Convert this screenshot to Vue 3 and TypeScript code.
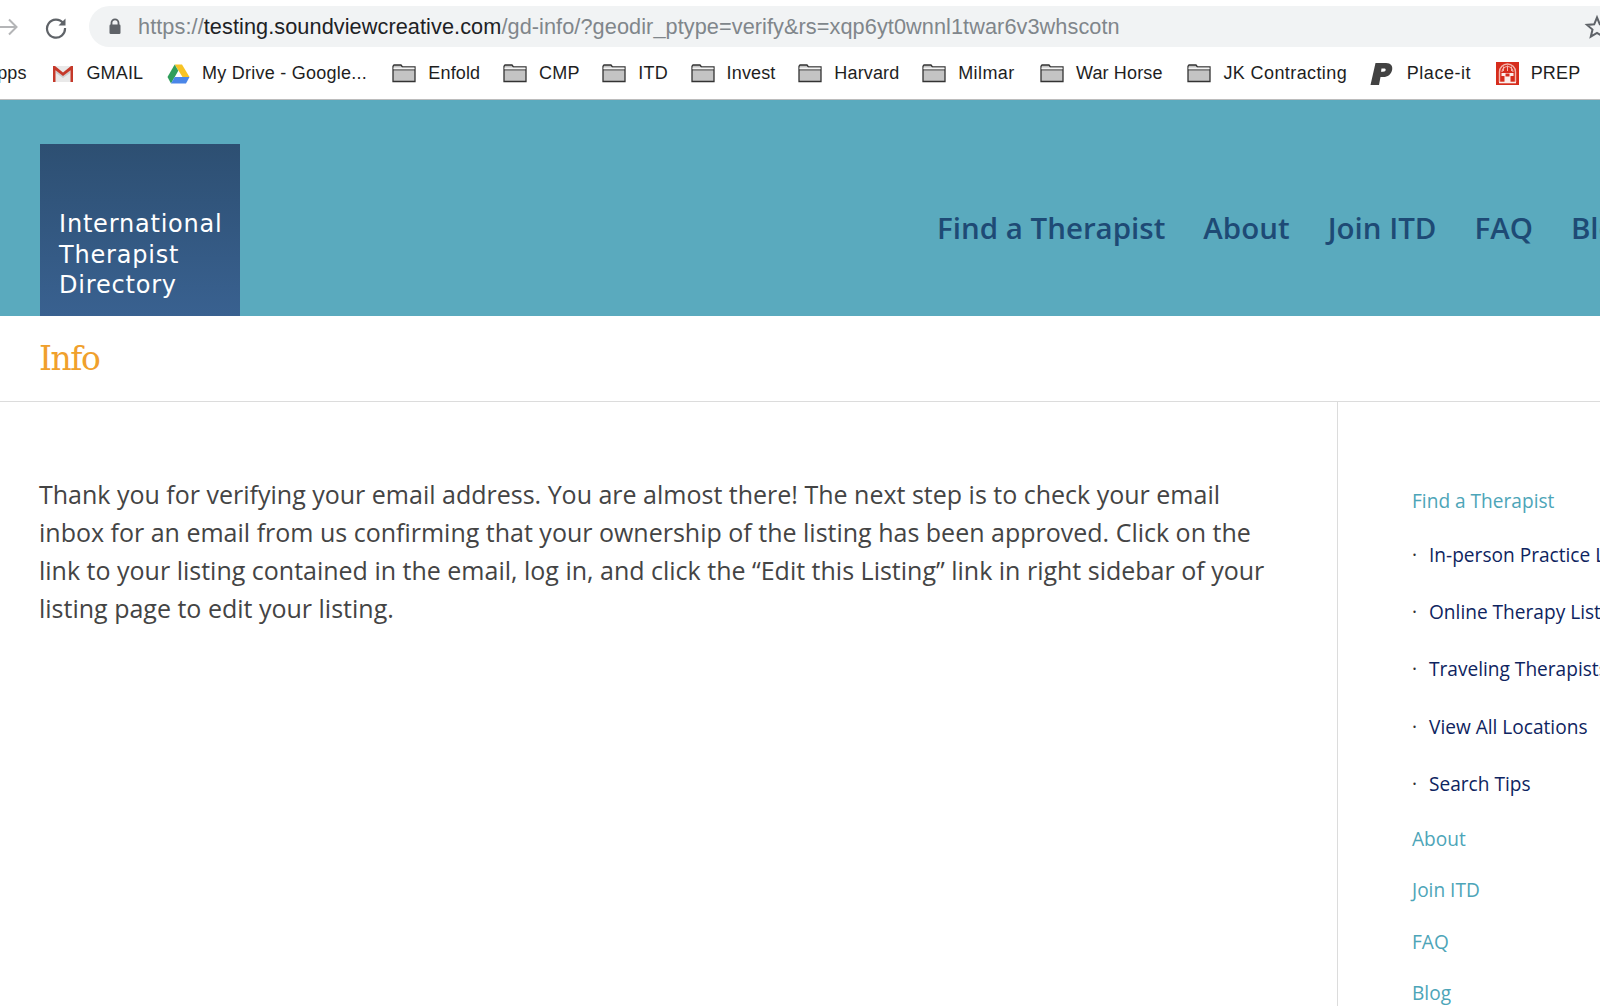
<template>
  <div class="page">
    <div class="toolbar">
      <svg class="nav-icon forward" width="22" height="22" viewBox="0 0 22 22"><path d="M-2 11H17M10 3.500L17.500 11L10 18.500" fill="none" stroke="#b4b5b7" stroke-width="2"/></svg>
      <svg class="nav-icon reload" width="24" height="24" viewBox="0 0 24 24"><path d="M19.200 8.200A9 9 0 1 0 21 13" fill="none" stroke="#5f6368" stroke-width="2.200"/><path d="M21.500 3.500V10.500H14.500Z" fill="#5f6368"/></svg>
      <div class="omnibox">
        <svg width="14" height="17" viewBox="0 0 14 17"><path d="M3.500 7V4.800a3.500 3.500 0 0 1 7 0V7" fill="none" stroke="#5f6368" stroke-width="1.800"/><rect x="1.500" y="6.500" width="11" height="9.500" rx="1.200" fill="#5f6368"/></svg>
        <span class="url"><span class="dim">https://</span>testing.soundviewcreative.com<span class="dim">/gd-info/?geodir_ptype=verify&amp;rs=xqp6yt0wnnl1twar6v3whscotn</span></span>
      </div>
      <svg class="star" width="26" height="26" viewBox="0 0 26 26"><path d="M13 3.500L15.800 10.300L23 10.900L17.500 15.600L19.200 22.700L13 18.900L6.800 22.700L8.500 15.600L3 10.900L10.200 10.300Z" fill="none" stroke="#5f6368" stroke-width="2"/></svg>
    </div>

    <div class="bookmarks">
      <span class="bm apps">Apps</span>
      <span v-for="b in bookmarks" :key="b.label" class="bm" :class="'bm-' + b.icon">
        <svg v-if="b.icon === 'gmail'" width="22" height="18" viewBox="0 0 22 18"><path d="M1 1H21V17H1Z" fill="#e9e9e9"/><path d="M4 5L11 11L18 5V8L11 13L4 8Z" fill="#cdcdcd"/><path d="M1 1H3L11 7.500L19 1H21V17H18.500V5.300L11 11L3.500 5.300V17H1Z" fill="#c5392a"/></svg>
        <svg v-else-if="b.icon === 'drive'" width="23" height="20" viewBox="0 0 23 20"><path d="M7.700 0.500H15L22.500 13H15.500Z" fill="#f7c325"/><path d="M7.700 0.500L0.500 13L4 19.500L11.300 6.800Z" fill="#2f9e5b"/><path d="M4 19.500H19L22.500 13H7.700Z" fill="#4a86e8"/></svg>
        <svg v-else-if="b.icon === 'place'" width="23" height="24" viewBox="0 0 23 24"><path d="M5.500 1H16C21 1 22.800 4 22.200 7.500C21.400 12.500 17.500 15 13.500 15H10.500L9 23H0.500Z M11.500 6.500L11 9.800H13C14.800 9.800 15.700 9 15.700 7.800C15.700 6.800 15 6.500 14 6.500Z" fill="#424242" fill-rule="evenodd"/></svg>
        <svg v-else-if="b.icon === 'prep'" width="23" height="23" viewBox="0 0 23 23"><rect width="23" height="23" fill="#d62c1c"/><path d="M3.500 20V10A8 8 0 0 1 19.500 10V20" fill="none" stroke="#f3b5ac" stroke-width="1.400"/><path d="M6 10A5.500 5.500 0 0 1 17 10" fill="none" stroke="#f3b5ac" stroke-width="1.200"/><path d="M7.500 4.500V9M11.500 3.500V9M15.500 4.500V9" stroke="#f3b5ac"/><path d="M5.500 11H17.500V14H14.500V20H8.500V14H5.500Z" fill="#fbeeeb" fill-rule="evenodd"/><path d="M9.500 11.500H13.500V14.500H9.500Z" fill="#d62c1c"/><path d="M3 20.500H20" stroke="#fbeeeb" stroke-width="1.600"/></svg>
        <svg v-else width="24" height="19" viewBox="0 0 24 19"><path d="M1 17.500V2.200L2 1H9L10.500 3H23V17.500Z" fill="#c4c4c4" stroke="#333" stroke-width="1.300"/><path d="M1 5.800H23" stroke="#333" stroke-width="1.100"/><path d="M1.500 3.500H22.500V5.300H1.500Z" fill="#f4f4f4"/></svg>
        <span>{{ b.label }}</span>
      </span>
    </div>

    <header class="site-header">
      <div class="logo">International<br>Therapist<br>Directory</div>
      <nav class="main-nav">
        <a v-for="n in nav" :key="n">{{ n }}</a>
      </nav>
    </header>

    <div class="title-bar"><h1>Info</h1></div>

    <div class="content">
      <main class="entry">
        <p>Thank you for verifying your email address. You are almost there! The next step is to check your email inbox for an email from us confirming that your ownership of the listing has been approved. Click on the link to your listing contained in the email, log in, and click the “Edit this Listing” link in right sidebar of your listing page to edit your listing.</p>
      </main>
      <aside class="sidebar">
        <a class="top first">Find a Therapist</a>
        <a v-for="s in subLinks" :key="s" class="sub"><i>·</i>{{ s }}</a>
        <a class="top about">About</a>
        <a class="top">Join ITD</a>
        <a class="top">FAQ</a>
        <a class="top">Blog</a>
      </aside>
    </div>
  </div>
</template>

<script setup lang="ts">
interface Bookmark {
  label: string
  icon: string
}

const bookmarks: Bookmark[] = [
  { label: 'GMAIL', icon: 'gmail' },
  { label: 'My Drive - Google...', icon: 'drive' },
  { label: 'Enfold', icon: 'folder' },
  { label: 'CMP', icon: 'folder' },
  { label: 'ITD', icon: 'folder' },
  { label: 'Invest', icon: 'folder' },
  { label: 'Harvard', icon: 'folder' },
  { label: 'Milmar', icon: 'folder' },
  { label: 'War Horse', icon: 'folder' },
  { label: 'JK Contracting', icon: 'folder' },
  { label: 'Place-it', icon: 'place' },
  { label: 'PREP', icon: 'prep' }
]

const nav = ['Find a Therapist', 'About', 'Join ITD', 'FAQ', 'Blog']

const subLinks = [
  'In-person Practice Listings',
  'Online Therapy Listings',
  'Traveling Therapists',
  'View All Locations',
  'Search Tips'
]
</script>

<style>
html, body { margin: 0; background: #fff; overflow: hidden; }
</style>

<style scoped>
.page { width: 1600px; height: 1006px; overflow: hidden; font-family: "Open Sans", sans-serif; }

.toolbar { display: flex; align-items: center; padding-top: 6px; box-sizing: border-box; height: 52px; }
.forward { margin-left: -1px; flex: none; margin-top: -5px; }
.reload { margin-left: 23px; margin-top: -5px; flex: none; }
.omnibox {
  flex: none; width: 1530px; height: 41px; margin-left: 21px; margin-top: -5px; margin-right: -120px;
  background: #f1f3f4; border-radius: 21px; display: flex; align-items: center; padding-left: 19px; box-sizing: border-box;
}
.url { margin-left: 16px; font: 21.700px "Liberation Sans", sans-serif; color: #202124; letter-spacing: 0.080px; white-space: nowrap; }
.dim { color: #80868b; }
.star { position: absolute; left: 1584px; top: 14px; }

.bookmarks {
  height: 43px; padding-bottom: 4px; border-bottom: 1px solid #bcbcbc; display: flex; align-items: center; gap: 22.800px; margin-left: -15px;
  font: 18px "Liberation Sans", sans-serif; color: #1e1e1e; white-space: nowrap;
}
.bm { display: flex; align-items: center; gap: 12px; letter-spacing: 0.150px; }
.apps { margin-right: 3px; }
.bm-gmail { margin-right: 1px; }
.bm-drive { margin-right: 2.500px; letter-spacing: 0.250px; }
.bm-place { gap: 14px; margin-right: 2px; letter-spacing: 0.500px; }
.bm-prep { gap: 12px; }
.bm:nth-child(9) { letter-spacing: 0.400px; margin-right: 2.500px; }
.bm:nth-child(10) { margin-right: 2px; }
.bm:nth-child(11) { letter-spacing: 0.400px; }

.site-header { height: 216px; background: #5aaabe; display: flex; align-items: flex-end; padding-left: 40px; }
.logo {
  width: 199.500px; height: 172px; box-sizing: border-box; padding: 65px 0 0 19px; flex: none;
  background: linear-gradient(#2d4f72, #396190); color: #fff;
  font: 24px/30.500px "DejaVu Sans", sans-serif; letter-spacing: 0.800px;
}
.main-nav { display: flex; gap: 38px; margin-left: 697.500px; align-self: center; margin-top: 38px; white-space: nowrap; }
.main-nav a { font-size: 29.500px; font-weight: 600; color: #1e4a75; }

.title-bar { height: 85px; border-bottom: 1px solid #dcdcdc; padding-left: 39px; display: flex; align-items: center; }
h1 { margin: 0; font: 400 33px "DejaVu Serif", serif; color: #f0a02c; letter-spacing: -1.500px; }

.content { display: flex; height: 604px; }
.entry { width: 1338px; border-right: 1px solid #dcdcdc; padding: 73px 60px 0 39px; box-sizing: border-box; flex: none; }
.entry p { margin: 0; font-size: 25px; line-height: 38px; color: #444; }

.sidebar { padding: 85px 0 0 74px; display: flex; flex-direction: column; white-space: nowrap; font-size: 19.100px; line-height: 28px; }
.top { color: #4da5b8; margin-bottom: 23.500px; }
.first { margin-bottom: 26px; }
.sub { color: #0e2460; margin-bottom: 29.200px; display: flex; }
.sub i { width: 17px; font-style: normal; color: #333; }
.about { margin-top: -2px; }
</style>
